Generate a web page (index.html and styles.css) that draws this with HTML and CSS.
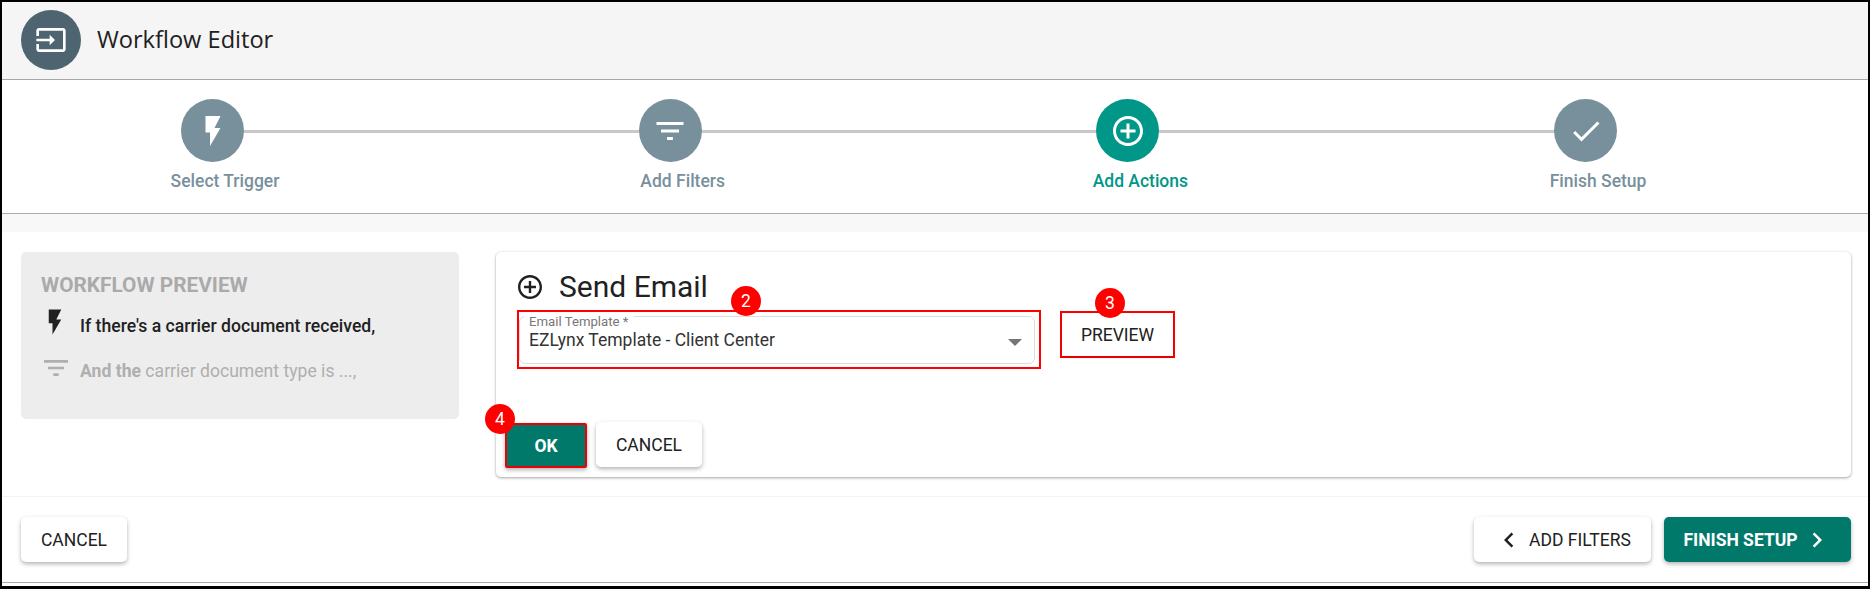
FILE: index.html
```html
<!DOCTYPE html>
<html lang="en">
<head>
<meta charset="utf-8">
<title>Workflow Editor</title>
<link rel="stylesheet" href="styles.css">
</head>
<body>
<div class="frame">
  <header class="topbar">
    <div class="logo"><svg class="icon-32" viewBox="0 0 24 24"><path d="M21 3.01H3c-1.1 0-2 .9-2 2V9h2V4.99h18v14.03H3V15H1v4.01c0 1.1.9 1.98 2 1.98h18c1.1 0 2-.88 2-1.98v-14c0-1.11-.9-2-2-2zM11 16l4-4-4-4v3H1v2h10v3z"/></svg></div>
    <h1 class="title">Workflow Editor</h1>
  </header>

  <nav class="stepper">
    <div class="step">
      <div class="step-head"><span class="dot"><svg class="icon-36" viewBox="0 0 24 24"><path d="M7 2v11h3v9l7-12h-4l4-8z"/></svg></span><span class="rail"></span></div>
      <div class="step-label">Select Trigger</div>
    </div>
    <div class="step">
      <div class="step-head"><span class="dot"><svg class="icon-36" viewBox="0 0 24 24"><path d="M10 18h4v-2h-4v2zM3 6v2h18V6H3zm3 7h12v-2H6v2z"/></svg></span><span class="rail"></span></div>
      <div class="step-label">Add Filters</div>
    </div>
    <div class="step active">
      <div class="step-head"><span class="dot"><svg class="icon-36" viewBox="0 0 24 24"><path d="M13 7h-2v4H7v2h4v4h2v-4h4v-2h-4V7zm-1-5C6.48 2 2 6.48 2 12s4.48 10 10 10 10-4.48 10-10S17.52 2 12 2zm0 18c-4.41 0-8-3.59-8-8s3.59-8 8-8 8 3.59 8 8-3.59 8-8 8z"/></svg></span><span class="rail"></span></div>
      <div class="step-label">Add Actions</div>
    </div>
    <div class="step last">
      <div class="step-head"><span class="dot"><svg class="icon-36" viewBox="0 0 24 24"><path d="M9 16.17L4.83 12l-1.41 1.41L9 19 21 7l-1.41-1.41z"/></svg></span></div>
      <div class="step-label">Finish Setup</div>
    </div>
  </nav>

  <div class="band"></div>

  <main class="main">
    <aside class="preview">
      <div class="preview-title">WORKFLOW PREVIEW</div>
      <div class="preview-row on">
        <svg class="icon-30" viewBox="0 0 24 24"><path d="M7 2v11h3v9l7-12h-4l4-8z"/></svg>
        <span class="strong">If there's a carrier document received,</span>
      </div>
      <div class="preview-row off">
        <svg class="icon-32" viewBox="0 0 24 24"><path d="M10 18h4v-2h-4v2zM3 6v2h18V6H3zm3 7h12v-2H6v2z"/></svg>
        <span><b class="strong">And the</b> carrier document type is ...,</span>
      </div>
    </aside>

    <section class="card">
      <div class="card-title">
        <svg class="icon-24" viewBox="2 2 20 20"><path d="M13 7h-2v4H7v2h4v4h2v-4h4v-2h-4V7zm-1-5C6.48 2 2 6.48 2 12s4.48 10 10 10 10-4.48 10-10S17.52 2 12 2zm0 18c-4.41 0-8-3.59-8-8s3.59-8 8-8 8 3.59 8 8-3.59 8-8 8z"/></svg>
        <h2 class="card-heading">Send Email</h2>
      </div>
      <div class="field-row">
        <div class="mark field-mark">
          <div class="select">
            <span class="select-label">Email Template *</span>
            <span class="select-value">EZLynx Template - Client Center</span>
            <span class="select-arrow"></span>
          </div>
          <span class="badge badge-2">2</span>
        </div>
        <div class="mark preview-mark">
          <button class="btn plain-btn">PREVIEW</button>
          <span class="badge badge-3">3</span>
        </div>
      </div>
      <div class="card-actions">
        <div class="ok-wrap">
          <button class="btn primary ok-btn">OK</button>
          <span class="badge badge-4">4</span>
        </div>
        <button class="btn cancel-small">CANCEL</button>
      </div>
    </section>
  </main>

  <footer class="footer">
    <button class="btn cancel-main">CANCEL</button>
    <div class="footer-right">
      <button class="btn back-btn"><svg class="icon-30" viewBox="0 0 24 24"><path d="M15.41 7.41L14 6l-6 6 6 6 1.41-1.41L10.83 12z"/></svg>ADD FILTERS</button>
      <button class="btn primary next-btn">FINISH SETUP<svg class="icon-30" viewBox="0 0 24 24"><path d="M10 6L8.59 7.41 13.17 12l-4.58 4.59L10 18l6-6z"/></svg></button>
    </div>
  </footer>
</div>
</body>
</html>
```

FILE: styles.css
```css
* { box-sizing: border-box; }
html, body { margin: 0; padding: 0; background: #fff; }
body { font-family: Roboto, "Liberation Sans", sans-serif; color: #212121; }
svg { fill: currentColor; display: block; flex: none; }
.icon-36 { width: 36px; height: 36px; }
.icon-32 { width: 32px; height: 32px; }
.icon-30 { width: 30px; height: 30px; }
.icon-24 { width: 24px; height: 24px; }

.frame {
  width: 1870px;
  height: 589px;
  border: solid #000;
  border-width: 2px 2px 3px 2px;
  display: flex;
  flex-direction: column;
  overflow: hidden;
  background: #fff;
}

.topbar {
  height: 78px;
  flex: none;
  background: #f5f5f5;
  border-bottom: 1px solid #a8a8a8;
  display: flex;
  align-items: center;
  padding: 0 19px 1px;
  gap: 16px;
}
.logo {
  width: 60px;
  height: 60px;
  border-radius: 50%;
  background: #4e6571;
  color: #fff;
  display: flex;
  align-items: center;
  justify-content: center;
}
.title {
  margin: 0;
  font: 400 23.6px/1 "Open Sans", sans-serif;
  color: #212121;
}

.stepper {
  height: 134px;
  flex: none;
  border-bottom: 1px solid #aaa;
  padding: 19px 0 0 179px;
  display: flex;
}
.step { width: 457.7px; flex: none; }
.step.last { width: 200px; }
.step-head { display: flex; align-items: center; }
.dot {
  width: 63px;
  height: 63px;
  flex: none;
  border-radius: 50%;
  background: #78909c;
  color: #fff;
  display: flex;
  align-items: center;
  justify-content: center;
}
.rail { flex: 1; height: 3px; background: #c8c8c8; margin-top: 2px; }
.step-label {
  width: 200px;
  margin: 9px 0 0 -56px;
  text-align: center;
  font-size: 17.5px;
  line-height: 20px;
  font-weight: 500;
  color: #78909c;
}
.step.active .dot { background: #009688; }
.step.active .step-label { color: #009688; }

.band { height: 18px; flex: none; background: #f8f8f8; }

.main {
  flex: 1;
  display: flex;
  align-items: flex-start;
  gap: 37px;
  padding: 20px 17px 0 19px;
}
.preview {
  width: 438px;
  height: 167px;
  flex: none;
  background: #ededed;
  border-radius: 5px;
  padding: 21px 20px 0;
}
.preview-title {
  font-size: 20.8px;
  line-height: 24px;
  font-weight: 700;
  color: #aaa;
}
.preview-row {
  display: flex;
  align-items: flex-start;
  font-size: 17.6px;
  line-height: 21px;
  gap: 9px;
}
.preview-row svg { margin-left: -1px; }
.preview-row.on svg { margin-right: 1px; }
.preview-row.off svg { margin-right: -1px; }
.preview-row span { margin-top: 9px; }
.preview-row.on { margin-top: 10px; color: #212121; }
.preview-row.off { margin-top: 15px; color: #afafaf; }
.strong { font-weight: 500; }
.preview-row.off .strong { font-weight: 700; }

.card {
  flex: 1;
  height: 225px;
  background: #fff;
  border-radius: 5px;
  box-shadow: 0 1px 3px rgba(0,0,0,.35), 0 0 2px rgba(0,0,0,.06);
  padding: 18px 21px 0;
}
.card-title { display: flex; align-items: center; gap: 17px; height: 34px; padding-left: 1px; }
.card-heading { margin: 0; font-size: 30px; line-height: 34px; font-weight: 400; color: #212121; }

.field-row { display: flex; align-items: flex-start; gap: 19px; margin-top: 6px; }
.mark { position: relative; border: 2px solid #f00; flex: none; }
.field-mark { width: 524px; height: 59px; padding: 4px 4px 0 0; }
.select {
  position: relative;
  width: 516px;
  height: 48px;
  border: 1px solid #dcdcdc;
  border-radius: 6px;
  padding: 13px 9px 0;
  font-size: 17.5px;
  line-height: 21px;
  color: #333;
}
.select-label {
  position: absolute;
  left: 4px;
  top: -2px;
  background: #fff;
  padding: 0 5px;
  font-size: 13.2px;
  line-height: 14px;
  color: #777;
}
.select-value { display: block; }
.select-arrow {
  position: absolute;
  right: 12px;
  top: 22px;
  border: 7px solid transparent;
  border-top: 7px solid #757575;
  border-bottom: 0;
}
.preview-mark { width: 115px; height: 47px; margin-top: 1px; }

.btn {
  font-family: Roboto, "Liberation Sans", sans-serif;
  font-size: 17.5px;
  font-weight: 400;
  color: #212121;
  background: #fff;
  border: 0;
  border-radius: 5px;
  height: 45px;
  padding: 0;
  display: flex;
  align-items: center;
  justify-content: center;
  box-shadow: 0 2px 4px rgba(0,0,0,.3);
}
.btn.primary { background: #00796b; color: #fff; font-weight: 700; }
.plain-btn { width: 100%; height: 100%; border-radius: 0; box-shadow: 0 1px 3px rgba(0,0,0,.2); }

.badge {
  position: absolute;
  width: 30px;
  height: 30px;
  border-radius: 50%;
  background: #f00;
  color: #fff;
  font-size: 17.5px;
  line-height: 30px;
  text-align: center;
  z-index: 2;
}
.badge-2 { left: 212px; top: -26px; }
.badge-3 { left: 33px; top: -25px; }
.badge-4 { left: -20px; top: -19px; }

.card-actions { display: flex; align-items: flex-start; gap: 9px; margin: 53px 0 0 -12px; }
.ok-wrap { position: relative; margin-top: 1px; }
.ok-btn { width: 82px; border: 2px solid #e00; border-radius: 2px; }
.cancel-small { width: 106px; }

.footer {
  height: 87px;
  flex: none;
  border-top: 1px solid #f3f3f3;
  border-bottom: 1px solid #aaa;
  margin-bottom: 3px;
  padding: 20px 17px 0 19px;
  display: flex;
  justify-content: space-between;
  align-items: flex-start;
}
.footer-right { display: flex; gap: 13px; }
.cancel-main { width: 106px; }
.back-btn { width: 177px; gap: 5px; }
.next-btn { width: 187px; gap: 4px; }
```
